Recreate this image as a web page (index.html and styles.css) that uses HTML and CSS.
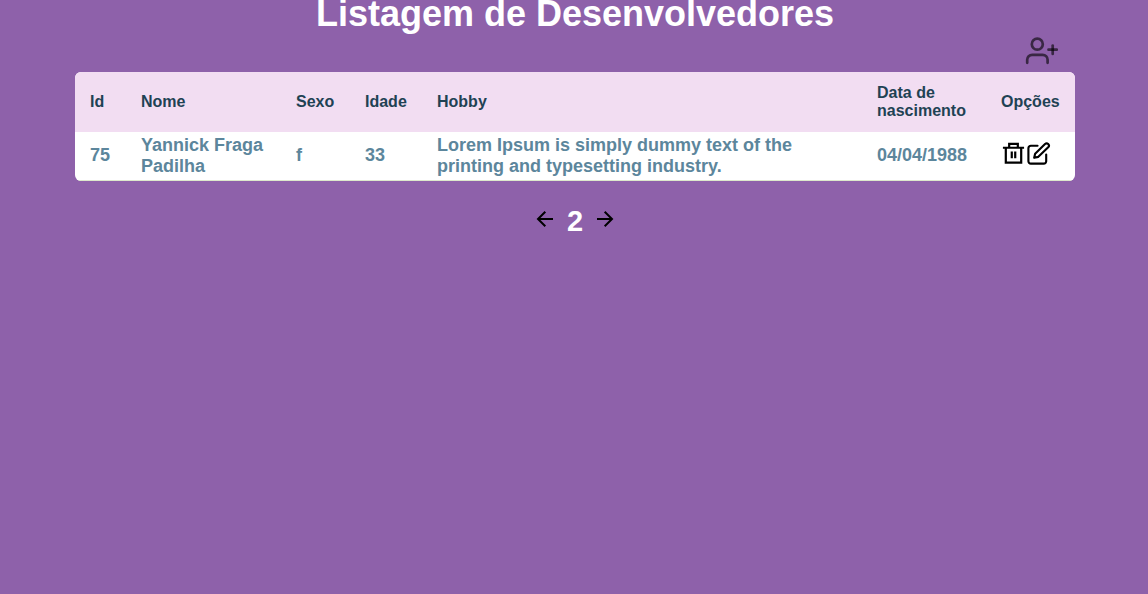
FILE: index.html
```html
<!DOCTYPE html>
<html lang="pt-BR">
<head>
<meta charset="utf-8">
<meta name="viewport" content="width=device-width, initial-scale=1">
<title>Listagem de Desenvolvedores</title>
<link rel="stylesheet" href="styles.css">
</head>
<body>
<main class="page">
  <h1 class="title">Listagem de Desenvolvedores</h1>
  <div class="toolbar">
    <button class="icon-button" type="button" aria-label="Adicionar desenvolvedor">
      <svg class="icon-add" viewBox="0 0 36 34" fill="none" stroke="#000" stroke-opacity="0.6" stroke-width="2.7" stroke-linecap="round" stroke-linejoin="round">
        <circle cx="15.3" cy="10.2" r="5.5"/>
        <path d="M5.2 28.8v-3a5 5 0 0 1 5-5h10.4a5 5 0 0 1 5 5v3"/>
        <path d="M30.7 11.5v8.4"/><path d="M26.5 15.7h8.4"/>
      </svg>
    </button>
  </div>
  <table class="developers">
    <colgroup>
      <col class="col-id"><col class="col-name"><col class="col-sex"><col class="col-age"><col class="col-hobby"><col class="col-birth"><col class="col-options">
    </colgroup>
    <thead>
      <tr><th>Id</th><th>Nome</th><th>Sexo</th><th>Idade</th><th>Hobby</th><th>Data de nascimento</th><th>Opções</th></tr>
    </thead>
    <tbody>
      <tr>
        <td>75</td><td>Yannick Fraga Padilha</td><td>f</td><td>33</td>
        <td><p class="hobby">Lorem Ipsum is simply dummy text of the printing and typesetting industry.</p></td>
        <td>04/04/1988</td>
        <td>
          <div class="actions">
            <button class="icon-button" type="button" aria-label="Excluir">
              <svg class="icon" viewBox="0 0 26 26" fill="none" stroke="#000" stroke-width="2.3">
                <path d="M2 7h22M8.5 7V3h9v4M5 7v15.5h16V7M11.2 11v7M14.8 11v7"/>
              </svg>
            </button>
            <button class="icon-button" type="button" aria-label="Editar">
              <svg class="icon" viewBox="0 0 26 26" fill="none" stroke="#000" stroke-width="2.2" stroke-linecap="round" stroke-linejoin="round">
                <path d="M12 5H5a2.5 2.5 0 0 0-2.500 2.500v13.500a2.500 2.500 0 0 0 2.500 2.500h13.500a2.500 2.500 0 0 0 2.500-2.500v-7"/>
                <path d="M19.800 3.200a2.300 2.300 0 0 1 3.300 3.300L12.800 16.500l-4.300 1 1-4.300z"/>
              </svg>
            </button>
          </div>
        </td>
      </tr>
    </tbody>
  </table>
  <nav class="pager" aria-label="Paginação">
    <button class="icon-button" type="button" aria-label="Página anterior">
      <svg class="icon-arrow" viewBox="0 0 24 24" fill="none" stroke="#000" stroke-width="2"><path d="M20 12H5.500M12.300 4.700L5 12l7.300 7.300"/></svg>
    </button>
    <span class="page-number">2</span>
    <button class="icon-button" type="button" aria-label="Próxima página">
      <svg class="icon-arrow" viewBox="0 0 24 24" fill="none" stroke="#000" stroke-width="2"><path d="M4 12h14.500M11.700 4.700L19 12l-7.300 7.300"/></svg>
    </button>
  </nav>
</main>
</body>
</html>
```

FILE: styles.css
```css
* { box-sizing: border-box; margin: 0; padding: 0; }

body {
  padding-left: 2px;
  background: #8e61aa;
  color: #fff;
  font-family: "Liberation Sans", Arial, sans-serif;
}

.page {
  width: 100%;
  max-width: 1000px;
  margin: -7px auto 0;
}

.title {
  font-size: 36px;
  line-height: 41px;
  text-align: center;
}

.toolbar {
  display: flex;
  justify-content: flex-end;
  padding: 0 17px 4px 0;
}

.icon-button {
  display: block;
  border: 0;
  background: none;
  cursor: pointer;
}

.icon-button svg { display: block; }
.icon-add { width: 36px; height: 34px; }
.icon { width: 25px; height: 25px; }
.icon-arrow { width: 24px; height: 24px; }

.developers {
  width: 100%;
  table-layout: fixed;
  border-spacing: 0;
  border-radius: 6px;
  overflow: hidden;
  background: #fff;
  font-weight: bold;
  text-align: left;
}

.col-id { width: 5.1%; }
.col-name { width: 15.5%; }
.col-sex { width: 6.9%; }
.col-age { width: 7.2%; }
.col-hobby { width: 44%; }
.col-birth { width: 12.4%; }
.col-options { width: 8.9%; }

th {
  height: 60px;
  padding: 0 15px;
  background: #f2ddf2;
  color: #1f4254;
  font-size: 16px;
  line-height: 18px;
}

td {
  height: 49px;
  padding: 0 15px 1px;
  border-bottom: 1px solid #dde8cc;
  color: #5c869c;
  font-size: 18px;
  line-height: 21px;
}

.hobby { max-width: 400px; }

.actions {
  display: flex;
  padding-bottom: 4px;
}

.pager {
  display: flex;
  align-items: flex-start;
  justify-content: center;
  gap: 10px;
  padding-top: 26px;
}

.page-number {
  font-size: 29px;
  font-weight: bold;
  line-height: 28px;
}
```
